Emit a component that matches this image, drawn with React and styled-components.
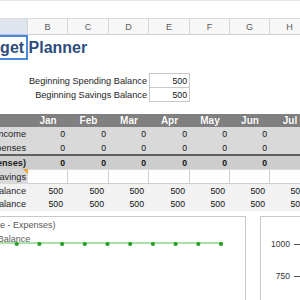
import React from 'react';
import styled, { createGlobalStyle } from 'styled-components';

const Global = createGlobalStyle`
  html, body { margin: 0; padding: 0; background: #fff; }
  body { font-family: "Liberation Sans", Arial, sans-serif; overflow: hidden; }
  * { box-sizing: border-box; }
`;

const COLS = '61px 40px 41px 40px 41px 40px 40px 40px 40px 40px 40px 40px 40px';
const LETTERS = ['A', 'B', 'C', 'D', 'E', 'F', 'G', 'H', 'I', 'J', 'K', 'L', 'M'];
const MONTHS = ['Jan', 'Feb', 'Mar', 'Apr', 'May', 'Jun', 'Jul', 'Aug', 'Sep', 'Oct', 'Nov', 'Dec'];

const Page = styled.div`
  width: 300px;
  height: 300px;
  overflow: hidden;
  border-top: 1px solid #e6e6e6;
`;

const TopBand = styled.div`
  height: 17px;
`;

const Sheet = styled.div`
  margin-left: -33px;
  width: 620px;
`;

const Row = styled.div`
  display: grid;
  grid-template-columns: ${COLS};
  height: ${(p) => p.$h}px;
  background: ${(p) => p.$bg || 'transparent'};
  border-top: ${(p) => (p.$topRule ? '2px solid #5e5e5e' : 'none')};
`;

const HeaderCell = styled.div`
  display: flex;
  align-items: center;
  justify-content: center;
  font-size: 9px;
  color: #5a5a5a;
  background: ${(p) => (p.$selected ? '#dfe5ee' : '#f7f7f7')};
  border-top: 1px solid #dcdcdc;
  border-right: 1px solid #d6d6d6;
  border-bottom: 1px solid ${(p) => (p.$selected ? '#b9c6da' : '#cfcfcf')};
`;

const TitleCell = styled.div`
  border: 2px solid #4a86dc;
  border-left: none;
  display: flex;
  align-items: center;
  white-space: nowrap;
  overflow: visible;
  position: relative;
  z-index: 1;
`;

const Title = styled.span`
  font-size: 16px;
  font-weight: bold;
  color: #2e4c7c;
  line-height: 21px;
  padding-left: 2px;
`;

const Label = styled.div`
  grid-column: ${(p) => p.$span || 'auto'};
  display: flex;
  align-items: center;
  justify-content: flex-end;
  white-space: nowrap;
  padding-right: 2px;
  font-size: 9.2px;
  font-weight: ${(p) => (p.$bold ? 'bold' : 'normal')};
  color: #1e1e1e;
  background: ${(p) => p.$bg || 'transparent'};
  position: relative;
`;

const CommentLabel = styled(Label)`
  &::after {
    content: '';
    position: absolute;
    top: 0;
    right: 0;
    border-top: 5px solid #f0a030;
    border-left: 5px solid transparent;
  }
`;

const Value = styled.div`
  display: flex;
  align-items: center;
  justify-content: flex-end;
  padding-right: ${(p) => p.$pad ?? 3}px;
  font-size: 8.7px;
  font-weight: ${(p) => (p.$bold ? 'bold' : 'normal')};
  color: #111;
`;

const InputBox = styled(Value)`
  border: 1px solid #c8c8c8;
  border-top: ${(p) => (p.$first ? '1px solid #c8c8c8' : 'none')};
  padding-right: 2px;
  background: #fff;
`;

const SavingsCell = styled.div`
  background: #fff;
  border-right: 1px solid #cfcfcf;
  border-bottom: 1px solid #cfcfcf;
  border-top: 1px solid #dadada;
`;

const Month = styled.div`
  display: flex;
  align-items: center;
  justify-content: center;
  font-size: 10px;
  font-weight: bold;
  color: #fff;
  text-shadow: 0 0 1px rgba(0, 0, 0, 0.25);
`;

const ChartRow = styled.div`
  display: flex;
  gap: 14px;
  margin-top: 5px;
`;

const ChartBox = styled.div`
  width: ${(p) => p.$w}px;
  height: 90px;
  border: 1px solid #c8c8c8;
  border-right: ${(p) => (p.$open ? 'none' : '1px solid #c8c8c8')};
  position: relative;
  flex-shrink: 0;
`;

const Legend = styled.div`
  width: 92px;
  padding-top: 1px;
  display: flex;
  flex-direction: column;
  align-items: center;
`;

const LegendItem = styled.div`
  font-size: 9px;
  line-height: 14px;
  color: #595959;
  white-space: nowrap;
`;

const Plot = styled.svg`
  position: absolute;
  left: 0;
  top: 0;
`;

const Axis = styled.div`
  padding-top: 20px;
  display: flex;
  flex-direction: column;
  gap: 18px;
`;

const Tick = styled.div`
  display: flex;
  align-items: center;
  height: 14px;
`;

const TickLabel = styled.span`
  width: 29px;
  text-align: right;
  font-size: 8.5px;
  color: #333;
`;

const TickMark = styled.span`
  width: 6px;
  height: 1px;
  margin-left: 4px;
  background: #555;
`;

function App() {
  const markers = Array.from({ length: 11 }, (_, i) => 26 + i * 22.7);
  return (
    <Page>
      <Global />
      <TopBand />
      <Sheet>
        <Row $h={17}>
          {LETTERS.map((l, i) => (
            <HeaderCell key={l} $selected={i === 0}>{l}</HeaderCell>
          ))}
        </Row>
        <Row $h={25}>
          <TitleCell>
            <Title>Budget Planner</Title>
          </TitleCell>
        </Row>
        <Row $h={13} />
        <Row $h={15}>
          <Label $span="1 / 5">Beginning Spending Balance</Label>
          <InputBox $first>500</InputBox>
        </Row>
        <Row $h={14}>
          <Label $span="1 / 5">Beginning Savings Balance</Label>
          <InputBox>500</InputBox>
        </Row>
        <Row $h={12} />
        <Row $h={13} $bg="#808080">
          <div />
          {MONTHS.map((m) => (
            <Month key={m}>{m}</Month>
          ))}
        </Row>
        <Row $h={14} $bg="#d9d9d9">
          <Label>Income</Label>
          {MONTHS.map((m) => (
            <Value key={m}>0</Value>
          ))}
        </Row>
        <Row $h={13} $bg="#d9d9d9">
          <Label>Expenses</Label>
          {MONTHS.map((m) => (
            <Value key={m}>0</Value>
          ))}
        </Row>
        <Row $h={15} $bg="#cdcdcd" $topRule>
          <Label $bold>(Income - Expenses)</Label>
          {MONTHS.map((m) => (
            <Value key={m} $bold>0</Value>
          ))}
        </Row>
        <Row $h={15}>
          <CommentLabel $bg="#d9d9d9">Savings</CommentLabel>
          {MONTHS.map((m) => (
            <SavingsCell key={m} />
          ))}
        </Row>
        <Row $h={13} $bg="#f2f2f2">
          <Label>Spending Balance</Label>
          {MONTHS.map((m) => (
            <Value key={m} $pad={5}>500</Value>
          ))}
        </Row>
        <Row $h={14} $bg="#f2f2f2">
          <Label>Savings Balance</Label>
          {MONTHS.map((m) => (
            <Value key={m} $pad={5}>500</Value>
          ))}
        </Row>
        <ChartRow>
          <ChartBox $w={279}>
            <Legend>
              <LegendItem>(Income - Expenses)</LegendItem>
              <LegendItem>Balance</LegendItem>
            </Legend>
            <Plot width="277" height="88" viewBox="0 0 277 88">
              <line x1="20" y1="26" x2="255" y2="26" stroke="#8ad88a" strokeWidth="1.6" />
              {markers.map((x) => (
                <circle key={x} cx={x} cy="27" r="2.1" fill="#23a023" />
              ))}
            </Plot>
          </ChartBox>
          <ChartBox $w={80} $open>
            <Axis>
              <Tick>
                <TickLabel>1000</TickLabel>
                <TickMark />
              </Tick>
              <Tick>
                <TickLabel>750</TickLabel>
                <TickMark />
              </Tick>
            </Axis>
          </ChartBox>
        </ChartRow>
      </Sheet>
    </Page>
  );
}

export default App;
